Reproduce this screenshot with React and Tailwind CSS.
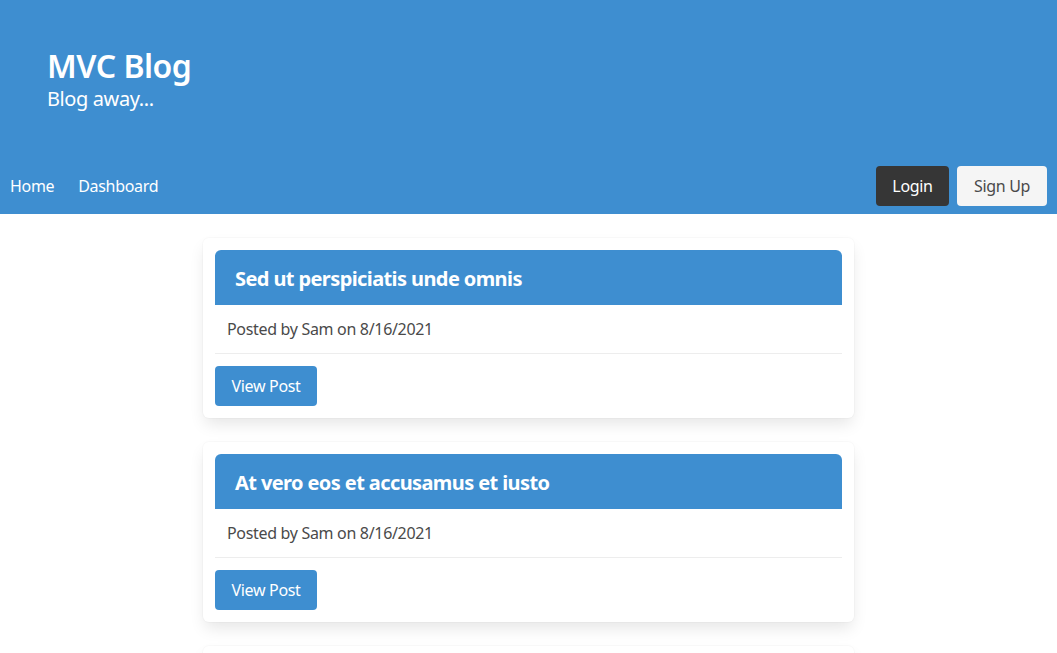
import React from "react";

const posts = [
  { id: 1, title: "Sed ut perspiciatis unde omnis", author: "Sam", date: "8/16/2021" },
  { id: 2, title: "At vero eos et accusamus et iusto", author: "Sam", date: "8/16/2021" },
  { id: 3, title: "Nam libero tempore, cum soluta", author: "Sam", date: "8/16/2021" },
];

const PostCard = ({ post }) => (
  <div className="w-[651px] mx-auto bg-white rounded-md p-3 shadow-[0_8px_16px_-2px_rgba(10,10,10,0.1),0_0_0_1px_rgba(10,10,10,0.02)]">
    <div className="h-[55px] flex items-center bg-[#3e8ed0] rounded-t-md pl-5">
      <h2 className="text-[20px] font-bold text-white tracking-[-0.03em] pt-0.5">{post.title}</h2>
    </div>
    <div className="h-[49px] flex items-center pl-3 border-b border-[#ededed] text-[#4a4a4a] tracking-[-0.02em]">
      Posted by {post.author} on {post.date}
    </div>
    <button className="mt-3 h-10 w-[102px] rounded bg-[#3e8ed0] text-white tracking-[-0.02em]">View Post</button>
  </div>
);

const App = () => {
  return (
    <div className="min-h-screen bg-white text-[16px] font-['Noto_Sans','Open_Sans',sans-serif]">
      <header className="bg-[#3e8ed0] text-white">
        <div className="pt-12 pl-[47px] h-[160px]">
          <h1 className="text-[32px] font-semibold leading-[36px] tracking-[-0.015em]">MVC Blog</h1>
          <p className="text-[20px] leading-[25px] mt-0.5 tracking-[-0.02em]">Blog away...</p>
        </div>
        <nav className="h-[54px] pt-[6px] pb-2 flex items-center justify-between tracking-[-0.02em]">
          <div className="flex items-center">
            <a className="pl-[10px] pr-[12px]">Home</a>
            <a className="px-[12px]">Dashboard</a>
          </div>
          <div className="flex items-center gap-2 pr-[10px]">
            <button className="h-10 w-[73px] rounded bg-[#363636] text-white">Login</button>
            <button className="h-10 w-[90px] rounded bg-[#f5f5f5] text-[#4a4a4a]">Sign Up</button>
          </div>
        </nav>
      </header>
      <main className="pt-6 flex flex-col gap-6 pb-6">
        {posts.map((post) => (
          <PostCard key={post.id} post={post} />
        ))}
      </main>
    </div>
  );
};

export default App;
